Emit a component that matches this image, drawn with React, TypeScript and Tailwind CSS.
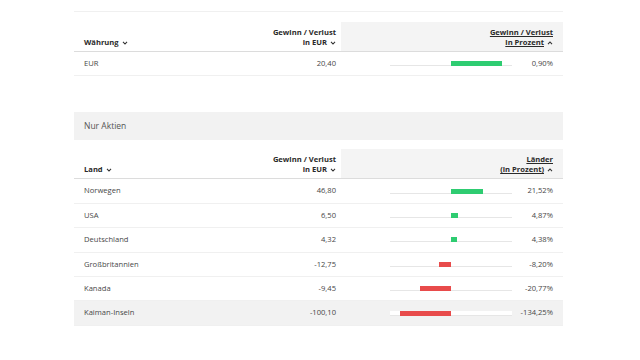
import React from "react";

type Row = { name: string; eur: string; pct: string; bar: number };

const waehrung: Row[] = [{ name: "EUR", eur: "20,40", pct: "0,90%", bar: 51 }];

const laender: Row[] = [
    { name: "Norwegen", eur: "46,80", pct: "21,52%", bar: 32 },
    { name: "USA", eur: "6,50", pct: "4,87%", bar: 7 },
    { name: "Deutschland", eur: "4,32", pct: "4,38%", bar: 6 },
    { name: "Großbritannien", eur: "-12,75", pct: "-8,20%", bar: -12 },
    { name: "Kanada", eur: "-9,45", pct: "-20,77%", bar: -31 },
    { name: "Kaiman-Inseln", eur: "-100,10", pct: "-134,25%", bar: -51 },
];

function Chevron({ up = false }: { up?: boolean }) {
    return (
        <svg width="6" height="4" viewBox="0 0 6 4" className="inline-block ml-[3px] align-middle">
            <polyline
                points={up ? "1,3.2 3,1 5,3.2" : "1,0.8 3,3 5,0.8"}
                fill="none"
                stroke="#333"
                strokeWidth="1.1"
            />
        </svg>
    );
}

function Bar({ value }: { value: number }) {
    const positive = value >= 0;
    return (
        <div className="relative w-[122px] h-[5px] bg-white border-b border-[#e6e6e6]">
            <div
                className={`absolute top-0 h-[5px] ${positive ? "bg-[#2ecc71]" : "bg-[#e84b4b]"}`}
                style={positive ? { left: 61, width: value } : { left: 61 + value, width: -value }}
            />
        </div>
    );
}

function Header({ first, pctTop, pctBottom }: { first: string; pctTop: string; pctBottom: string }) {
    return (
        <div className="grid grid-cols-[166px_101px_222px] h-[30px] border-b border-[#dcdcdc] text-[#2a2a2a] font-bold">
            <div className="flex items-end pl-[10px] pb-[4px] leading-[10px]">
                <span>
                    {first}
                    <Chevron />
                </span>
            </div>
            <div className="flex flex-col items-end justify-end pr-[5px] pb-[4px] leading-[10px]">
                <span>Gewinn / Verlust</span>
                <span>
                    in EUR
                    <Chevron />
                </span>
            </div>
            <div className="flex flex-col items-end justify-end bg-[#f4f4f4] pr-[10px] pb-[4px] leading-[10px]">
                <span className="underline">{pctTop}</span>
                <span>
                    <span className="underline">{pctBottom}</span>
                    <Chevron up />
                </span>
            </div>
        </div>
    );
}

function DataRow({ row, active = false }: { row: Row; active?: boolean }) {
    return (
        <div
            className={`grid grid-cols-[166px_101px_222px] h-[24.4px] items-center border-b border-[#f0f0f0] text-[#474747] ${
                active ? "bg-[#f2f2f2]" : ""
            }`}
        >
            <div className="pl-[10px]">{row.name}</div>
            <div className="text-right pr-[5px]">{row.eur}</div>
            <div className="flex items-center pl-[49px]">
                <Bar value={row.bar} />
                <div className="flex-1 text-right pr-[10px]">{row.pct}</div>
            </div>
        </div>
    );
}

export default function App() {
    return (
        <div className="w-[640px] h-[360px] bg-white overflow-hidden font-['Open_Sans',sans-serif] text-[7.6px]">
            <div className="ml-[74px] w-[489px] pt-[11px]">
                <div className="border-t border-[#f0f0f0] pt-[10px]">
                    <Header first="Währung" pctTop="Gewinn / Verlust" pctBottom="in Prozent" />
                    {waehrung.map((r) => (
                        <DataRow key={r.name} row={r} />
                    ))}
                </div>

                <div className="mt-[36px] h-[28px] bg-[#f2f2f2] flex items-center pl-[10px] text-[8.5px] text-[#555]">
                    Nur Aktien
                </div>

                <div className="pt-[9px]">
                    <Header first="Land" pctTop="Länder" pctBottom="(in Prozent)" />
                    {laender.map((r, i) => (
                        <DataRow key={r.name} row={r} active={i === laender.length - 1} />
                    ))}
                </div>
            </div>
        </div>
    );
}
